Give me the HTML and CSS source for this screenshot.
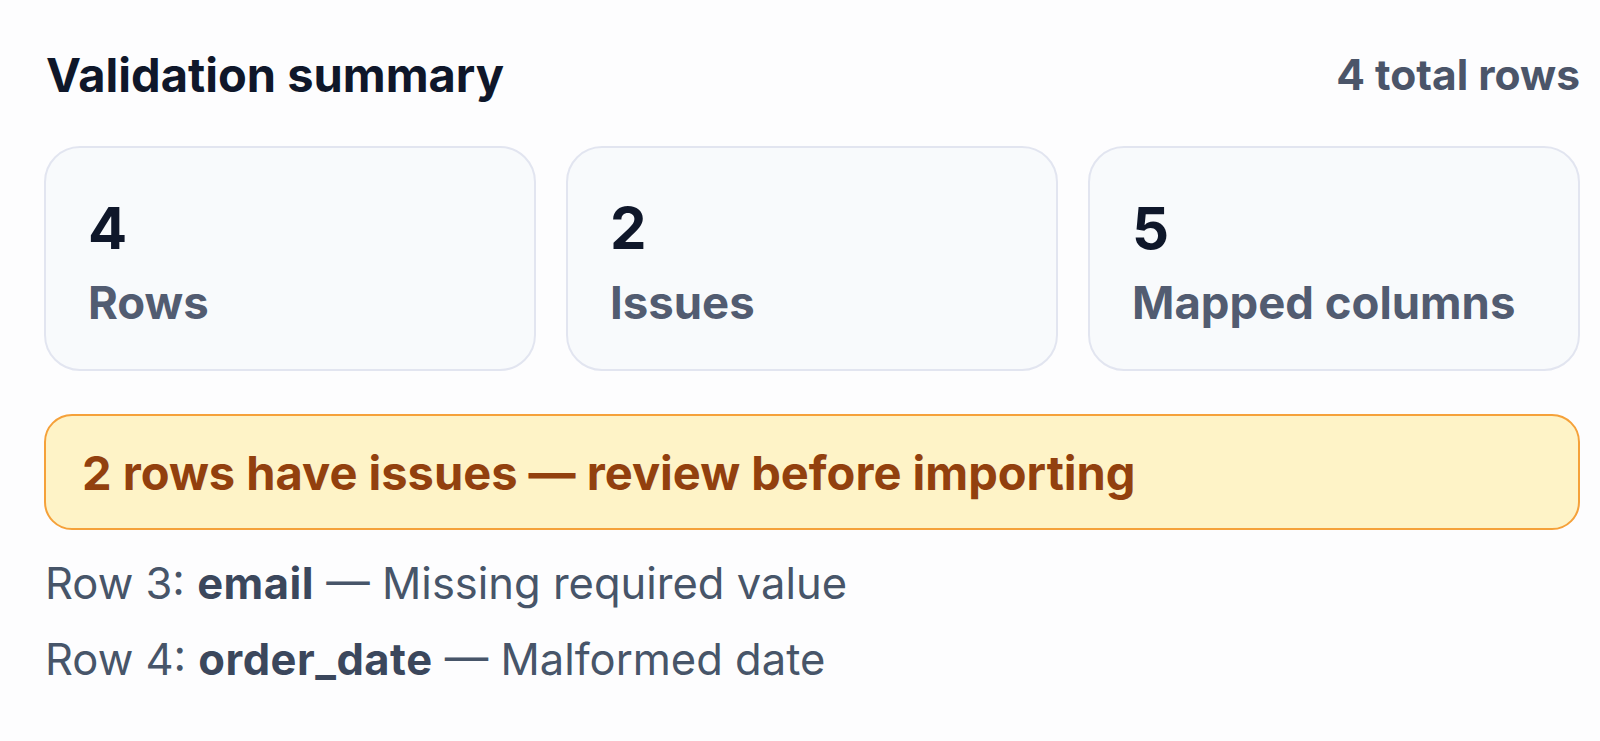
FILE: index.html
```html
<!DOCTYPE html>
<html lang="en">
<head>
<meta charset="utf-8">
<title>Validation summary</title>
<link rel="stylesheet" href="styles.css">
</head>
<body>
<main class="panel">
  <header class="panel-head">
    <h2 class="title">Validation summary</h2>
    <span class="total">4 total rows</span>
  </header>
  <section class="stats">
    <div class="stat"><div class="stat-num">4</div><div class="stat-label">Rows</div></div>
    <div class="stat"><div class="stat-num">2</div><div class="stat-label">Issues</div></div>
    <div class="stat"><div class="stat-num">5</div><div class="stat-label">Mapped columns</div></div>
  </section>
  <div class="alert">2 rows have issues — review before importing</div>
  <ul class="issues">
    <li>Row 3: <strong>email</strong> — Missing required value</li>
    <li>Row 4: <strong>order_date</strong> — Malformed date</li>
  </ul>
</main>
</body>
</html>
```

FILE: styles.css
```css
* { box-sizing: border-box; }
html, body { margin: 0; padding: 0; }
body {
  background: #ffffff;
  font-family: Inter, "Noto Sans", "Liberation Sans", sans-serif;
  width: 1600px;
  height: 741px;
  overflow: hidden;
}
.panel {
  padding: 40px 20px 0 44px;
  background: #fdfdfe;
  height: 741px;
}
.panel-head {
  display: flex;
  justify-content: space-between;
  align-items: center;
  height: 68px;
  padding-left: 2px;
}
.title {
  margin: 0;
  font-size: 47px;
  font-weight: 700;
  color: #0f172a;
}
.total {
  font-size: 42.5px;
  font-weight: 700;
  color: #4b5569;
}
.stats {
  margin-top: 38px;
  display: grid;
  grid-template-columns: repeat(3, 1fr);
  gap: 30px;
}
.stat {
  height: 225px;
  background: #f8fafc;
  border: 2px solid #e2e5f0;
  border-radius: 36px;
  padding: 48px 42px 0;
}
.stat-num {
  font-size: 58px;
  font-weight: 700;
  line-height: 64px;
  color: #0f172a;
}
.stat-label {
  margin-top: 17px;
  font-size: 45.5px;
  font-weight: 700;
  line-height: 52px;
  color: #525c71;
}
.alert {
  margin-top: 43px;
  height: 116px;
  display: flex;
  align-items: center;
  padding-left: 36px;
  background: #fef3c7;
  border: 2px solid #f5a13a;
  border-radius: 28px;
  color: #92400e;
  font-size: 47px;
  font-weight: 700;
}
.issues {
  list-style: none;
  margin: 15px 0 0;
  padding: 0 0 0 1px;
}
.issues li {
  font-size: 43.5px;
  line-height: 76px;
  color: #475569;
}
.issues strong {
  font-weight: 700;
  color: #3b475c;
  letter-spacing: 0.5px;
}
```
